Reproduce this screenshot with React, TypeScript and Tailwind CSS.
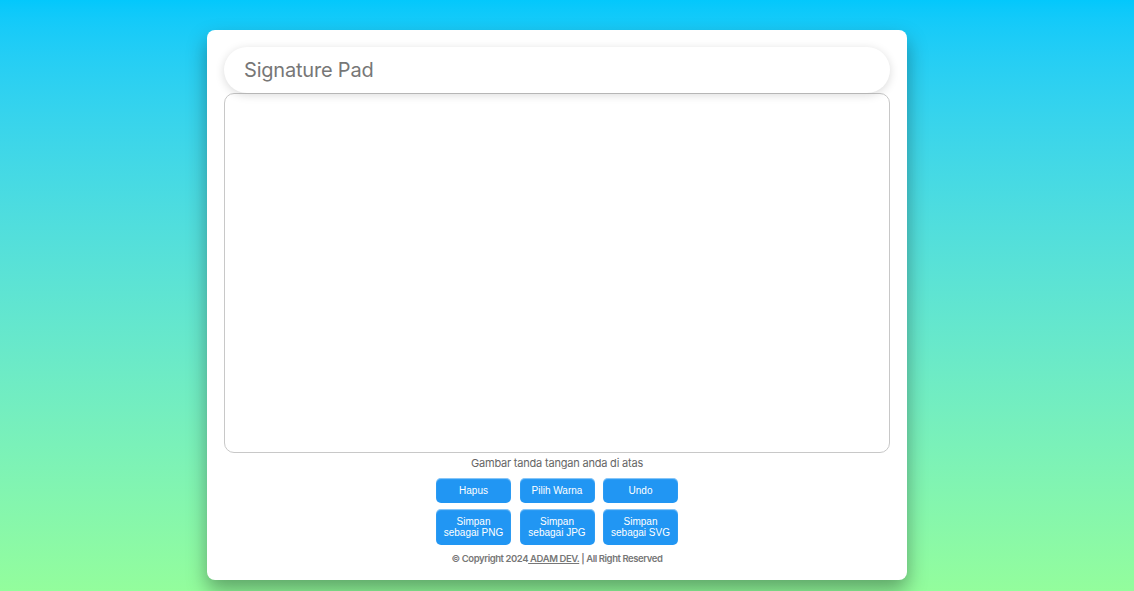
import React from "react";

export default function App() {
  const btn =
    "w-[75px] rounded-[5px] bg-[#2196f3] text-white text-[10px] leading-[11px] shadow-[inset_0_1px_1px_rgba(255,255,255,0.5)] flex items-center justify-center text-center";
  return (
    <div
      className="w-full h-[591px] flex justify-center pt-[30px] pr-[20px] bg-gradient-to-b from-[#03c8fc] to-[#93fd9c]"
      style={{ fontFamily: "Inter, 'Noto Sans', sans-serif" }}
    >
      <div className="w-[700px] h-fit bg-white rounded-[8px] px-[17px] pt-[17px] pb-[15px] flex flex-col shadow-[0_10px_20px_rgba(0,0,0,0.35)]">
        <div className="h-[46px] shrink-0 rounded-[23px] bg-white shadow-[0_2px_10px_rgba(0,0,0,0.15)] flex items-center px-[20px] relative z-10">
          <span className="text-[20px] text-[#777] tracking-[-0.2px]">Signature Pad</span>
        </div>
        <div className="h-[360px] shrink-0 border border-[#c8c8c8] rounded-[10px] bg-white"></div>
        <div className="text-center text-[11px] text-[#666] mt-[3px] leading-[15px] tracking-[-0.2px]">
          Gambar tanda tangan anda di atas
        </div>
        <div
          className="flex flex-col items-center gap-[6px] mt-[7px]"
          style={{ fontFamily: "'Liberation Sans', Arial, sans-serif" }}
        >
          <div className="flex gap-[8.5px]">
            <button className={btn + " h-[25px]"}>Hapus</button>
            <button className={btn + " h-[25px]"}>Pilih Warna</button>
            <button className={btn + " h-[25px]"}>Undo</button>
          </div>
          <div className="flex gap-[8.5px]">
            <button className={btn + " h-[36px]"}>Simpan<br />sebagai PNG</button>
            <button className={btn + " h-[36px]"}>Simpan<br />sebagai JPG</button>
            <button className={btn + " h-[36px]"}>Simpan<br />sebagai SVG</button>
          </div>
        </div>
        <div className="text-center text-[9.5px] leading-[12px] font-semibold text-[#777] mt-[8px] tracking-[-0.42px]">
          © Copyright 2024<span className="underline"> ADAM DEV.</span> | All Right Reserved
        </div>
      </div>
    </div>
  );
}
